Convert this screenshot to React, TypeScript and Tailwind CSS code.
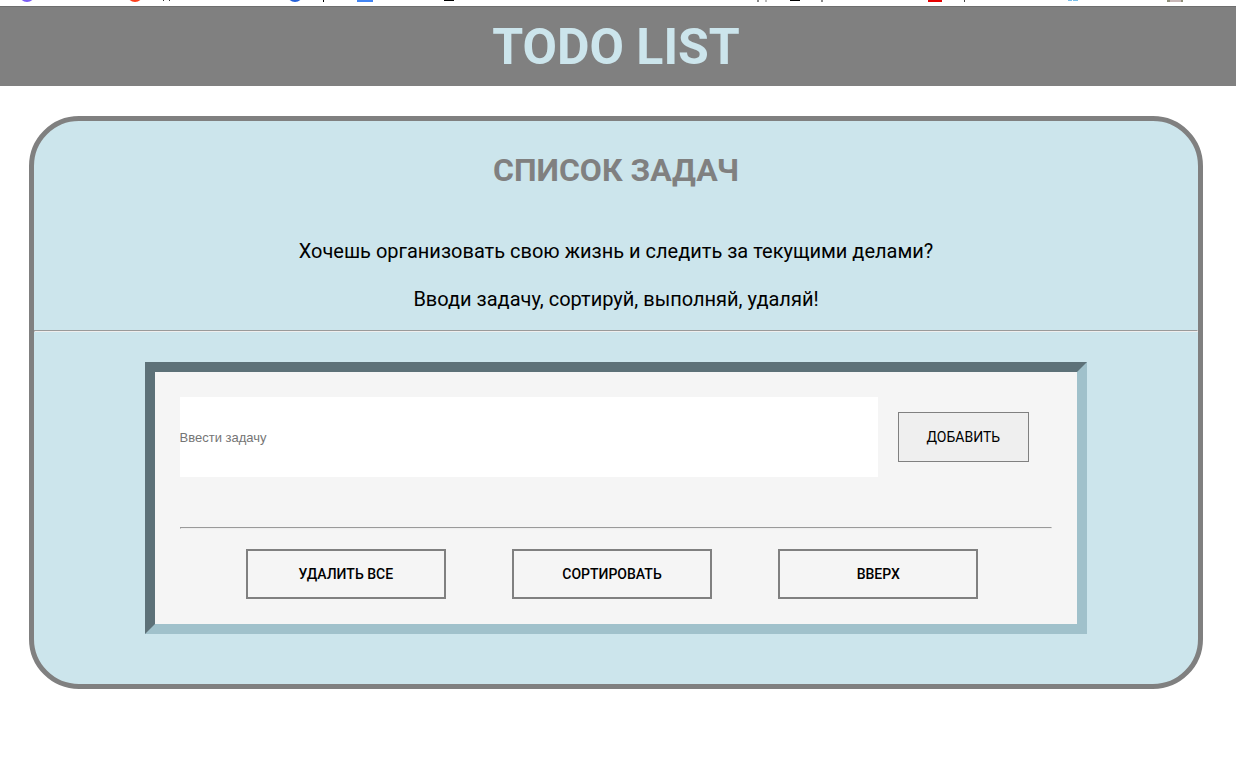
import { useState } from 'react';

function BookmarkStrip() {
  return (
    <div className="h-[7px] overflow-hidden border-b border-[#6e6e6e] bg-white">
      <svg width="1236" height="6" viewBox="0 0 1236 6" aria-hidden="true" className="block max-w-none">
        <circle cx="27" cy="-6" r="8" fill="#7b5cf5" />
        <circle cx="135" cy="-6" r="8" fill="#fc3f1d" />
        <path d="M163 0h1v1h-1zM169 0h1v1h-1z" fill="#333" />
        <circle cx="295" cy="-6" r="8" fill="#2560d8" />
        <rect x="323" y="0" width="1" height="2" fill="#000" />
        <rect x="357" y="0" width="16" height="2" fill="#4285f4" />
        <rect x="444" y="0" width="10" height="1" fill="#000" />
        <path d="M757 0h2v2h-2zM821 0h2v2h-2z" fill="#8a8a8a" />
        <rect x="765" y="0" width="2" height="2" fill="#bbb" />
        <rect x="790" y="0" width="10" height="1" fill="#000" />
        <rect x="928" y="0" width="14" height="2" fill="#e60000" />
        <rect x="964" y="0" width="1" height="2" fill="#444" />
        <path d="M1068 0h4v1h-4zM1073 0h5v1h-5z" fill="#7cc0ea" />
        <rect x="1167" y="0" width="16" height="2" fill="#c9b8b8" />
        <path d="M1167 0h3v2h-3zM1181 0h2v2h-2z" fill="#8f8f78" />
      </svg>
    </div>
  );
}

function Divider() {
  return <hr className="h-[2px] border border-[#9a9a9a] border-b-[#eeeeee] border-r-[#eeeeee]" />;
}

function ActionButton({ label, onClick }: { label: string; onClick: () => void }) {
  return (
    <button
      type="button"
      onClick={onClick}
      className="h-[50px] w-[200px] border-2 border-[#808080] bg-[#f5f5f5] font-['Roboto',sans-serif] text-sm font-medium text-black"
    >
      {label}
    </button>
  );
}

export default function App() {
  const [task, setTask] = useState('');
  const [tasks, setTasks] = useState<string[]>([]);

  const addTask = () => {
    const text = task.trim();
    if (!text) return;
    setTasks([...tasks, text]);
    setTask('');
  };

  return (
    <div className="min-h-screen bg-white font-['Roboto',sans-serif] text-black">
      <BookmarkStrip />
      <header className="bg-[#808080] pt-0.5 pr-1">
        <h1 className="text-center text-[50px] leading-[77px] font-bold text-[#cce5ec]">TODO LIST</h1>
      </header>
      <div className="pt-[30px] pr-1">
        <main className="mx-auto w-[95.3%] rounded-[50px] border-[5px] border-[#808080] bg-[#cce5ec] pb-[50px]">
          <h2 className="pt-7 text-center text-[32px] leading-[42px] font-bold text-[#808080]">СПИСОК ЗАДАЧ</h2>
          <div className="pt-9 pb-[7px] text-center text-xl leading-[48px]">
            <p>Хочешь организовать свою жизнь и следить за текущими делами?</p>
            <p>Вводи задачу, сортируй, выполняй, удаляй!</p>
          </div>
          <Divider />
          <section className="mx-auto mt-[30px] w-[81%] border-[10px] border-t-[#5d7178] border-r-[#a0c1cb] border-b-[#a0c1cb] border-l-[#5d7178] bg-[#f5f5f5] p-[25px]">
            <form
              className="flex items-center gap-5"
              onSubmit={(e) => {
                e.preventDefault();
                addTask();
              }}
            >
              <input
                type="text"
                aria-label="Ввести задачу"
                placeholder="Ввести задачу"
                value={task}
                onChange={(e) => setTask(e.target.value)}
                className="h-20 w-4/5 bg-white font-['Liberation_Sans',sans-serif] text-[13px] placeholder:text-[#757575]"
              />
              <button
                type="submit"
                className="h-[50px] w-[15%] border border-[#808080] bg-[#efefef] font-['Roboto',sans-serif] text-sm"
              >
                ДОБАВИТЬ
              </button>
            </form>
            <ul className="min-h-[50px]">
              {tasks.map((item, i) => (
                <li key={i} className="py-2">{item}</li>
              ))}
            </ul>
            <Divider />
            <div className="flex justify-evenly pt-5 pr-2">
              <ActionButton label="УДАЛИТЬ ВСЕ" onClick={() => setTasks([])} />
              <ActionButton label="СОРТИРОВАТЬ" onClick={() => setTasks([...tasks].sort())} />
              <ActionButton label="ВВЕРХ" onClick={() => window.scrollTo({ top: 0 })} />
            </div>
          </section>
        </main>
      </div>
    </div>
  );
}
